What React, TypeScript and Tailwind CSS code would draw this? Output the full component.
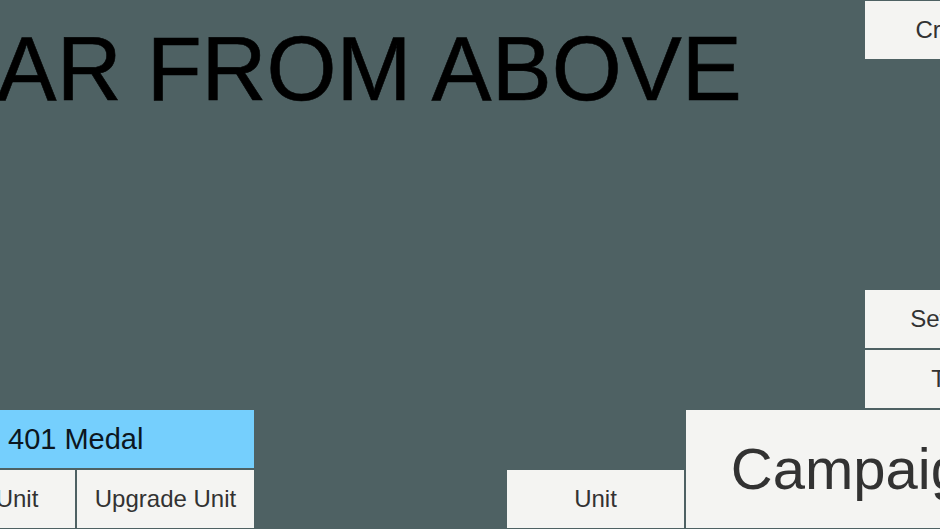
import React from "react";

const btn =
  "flex shrink-0 items-center justify-center whitespace-nowrap bg-[#f4f4f2] text-[#323232] text-[24px] leading-none";

export default function App() {
  return (
    <div className="h-[529px] w-[940px] overflow-hidden bg-[#4e6163] font-['Liberation_Sans',Arial,sans-serif]">
      <div className="flex h-full w-[1050px] flex-col">
        {/* top area: title + right menu */}
        <div className="flex h-[408px] shrink-0">
          <div className="min-w-0 flex-1">
            <h1 className="-ml-[85px] mt-[24px] whitespace-nowrap text-[90px] font-normal leading-none text-black [-webkit-text-stroke:0.6px_black]">
              WAR FROM ABOVE
            </h1>
          </div>
          <div className="mr-[8px] flex w-[177px] flex-col gap-[2px] pt-px">
            <button className={`${btn} h-[58px]`}>Credits</button>
            <div className="flex-1" />
            <button className={`${btn} h-[58px]`}>Settings</button>
            <button className={`${btn} h-[58px]`}>Tips</button>
          </div>
        </div>

        {/* bottom row */}
        <div className="mt-[2px] flex h-[118px] shrink-0">
          <div className="-ml-[41px] flex w-[295px] shrink-0 flex-col gap-[2px]">
            <div className="flex h-[58px] items-center bg-[#75cffd] pl-[49px] text-[29px] leading-none text-[#0c1620]">
              401 Medal
            </div>
            <div className="flex h-[58px] gap-[2px]">
              <button className={`${btn} w-[116px]`}>Unit</button>
              <button className={`${btn} w-[177px]`}>Upgrade Unit</button>
            </div>
          </div>
          <div className="ml-[253px] flex flex-col justify-end">
            <button className={`${btn} h-[58px] w-[177px]`}>Unit</button>
          </div>
          <button className={`${btn} ml-[2px] h-[118px] w-[354px] text-[58px]`}>
            Campaign
          </button>
        </div>
      </div>
    </div>
  );
}
